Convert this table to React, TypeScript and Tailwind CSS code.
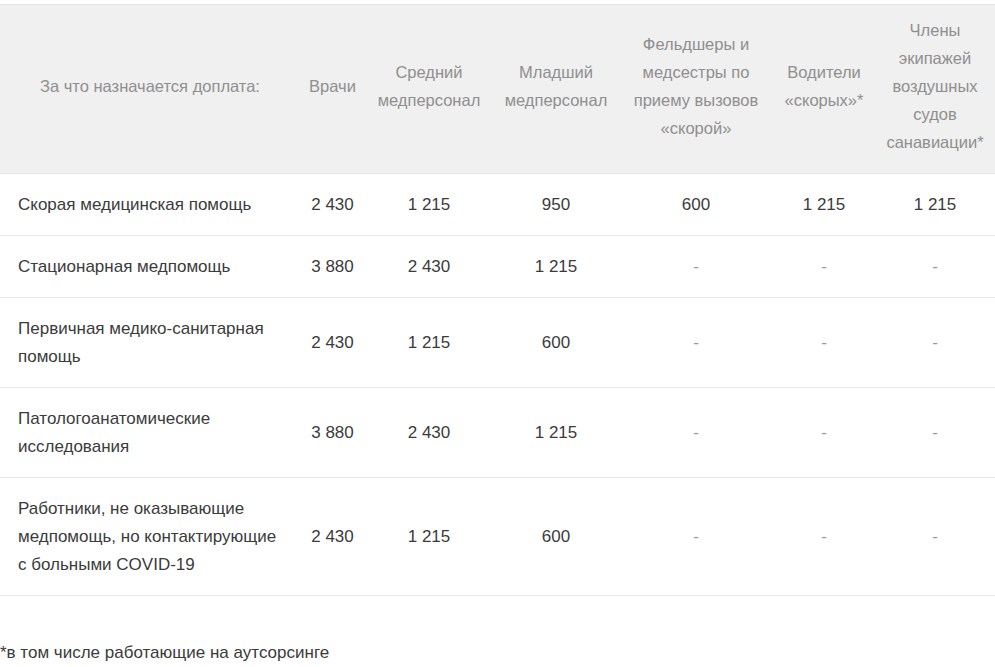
import React from 'react';

type Row = {
  label: string;
  values: string[];
};

const headers = [
  'Врачи',
  'Средний медперсонал',
  'Младший медперсонал',
  'Фельдшеры и медсестры по приему вызовов «скорой»',
  'Водители «скорых»*',
  'Члены экипажей воздушных судов санавиации*',
];

const colWidths = ['w-[300px]', 'w-[65px]', 'w-[128px]', 'w-[126px]', 'w-[154px]', 'w-[102px]', 'w-[120px]'];

const rows: Row[] = [
  { label: 'Скорая медицинская помощь', values: ['2 430', '1 215', '950', '600', '1 215', '1 215'] },
  { label: 'Стационарная медпомощь', values: ['3 880', '2 430', '1 215', '-', '-', '-'] },
  { label: 'Первичная медико-санитарная помощь', values: ['2 430', '1 215', '600', '-', '-', '-'] },
  { label: 'Патологоанатомические исследования', values: ['3 880', '2 430', '1 215', '-', '-', '-'] },
  {
    label: 'Работники, не оказывающие медпомощь, но контактирующие с больными COVID-19',
    values: ['2 430', '1 215', '600', '-', '-', '-'],
  },
];

export default function App() {
  return (
    <div className="w-[995px] h-[667px] overflow-hidden bg-white pt-[4px] font-['Liberation_Sans',Arial,sans-serif]">
      <table className="table-fixed w-[995px] border-collapse">
        <colgroup>
          {colWidths.map((w, i) => (
            <col key={i} className={w} />
          ))}
        </colgroup>
        <thead>
          <tr className="bg-[#f0f0f0] border-t border-b border-[#e4e4e4]">
            <th className="pt-[11px] pb-[17px] px-[10px] text-center align-middle text-[16.5px] leading-[28px] font-normal text-[#8f8f8f]">
              За что назначается доплата:
            </th>
            {headers.map((h, i) => (
              <th
                key={i}
                className="pt-[11px] pb-[17px] px-[6px] text-center align-middle text-[16.5px] leading-[28px] font-normal text-[#8f8f8f]"
              >
                {h}
              </th>
            ))}
          </tr>
        </thead>
        <tbody>
          {rows.map((r, i) => (
            <tr key={i} className="border-b border-[#e8e8e8]">
              <td className="py-[16.5px] pl-[18px] pr-[14px] text-left align-middle text-[17px] leading-[28px] text-[#3b3b3b]">
                {r.label}
              </td>
              {r.values.map((v, j) => (
                <td
                  key={j}
                  className={`py-[16.5px] px-[4px] text-center align-middle text-[17px] leading-[28px] ${
                    v === '-' ? 'text-[#999999]' : 'text-[#3b3b3b]'
                  }`}
                >
                  {v}
                </td>
              ))}
            </tr>
          ))}
        </tbody>
      </table>
      <p className="mt-[46px] text-[17px] leading-[22px] text-[#3b3b3b]">*в том числе работающие на аутсорсинге</p>
    </div>
  );
}
